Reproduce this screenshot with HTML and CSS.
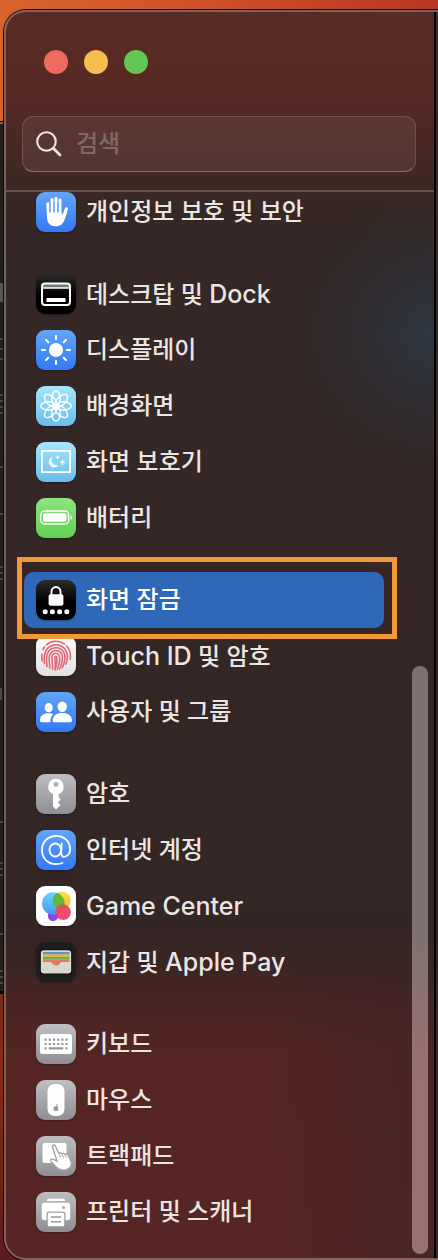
FILE: index.html
```
<!DOCTYPE html>
<html lang="ko">
<head>
<meta charset="utf-8">
<meta name="viewport" content="width=device-width, initial-scale=1">
<title>시스템 설정</title>
<link rel="stylesheet" href="styles.css">
</head>
<body>
<div class="window">
  <aside class="sidebar">
    <header class="header">
      <div class="lights">
        <button class="light light-close" type="button" aria-label="닫기"></button>
        <button class="light light-min" type="button" aria-label="최소화"></button>
        <button class="light light-zoom" type="button" aria-label="확대"></button>
      </div>
      <label class="search">
        <svg class="search-icon" viewBox="0 0 26 26" aria-hidden="true"><circle cx="10.5" cy="10.5" r="9.3" fill="none" stroke="#eee8e6" stroke-width="2.1"/><path d="M17.3 17.3 24 24" stroke="#eee8e6" stroke-width="2.8" stroke-linecap="round"/></svg>
        <input class="search-input" type="search" placeholder="검색" aria-label="검색">
      </label>
    </header>
    <nav class="list">
      <div class="group">
        <a class="item" href="#privacy"><svg class="icon blue" viewBox="0 0 40 40" aria-hidden="true"><g stroke="#fff" stroke-width="3" stroke-linecap="round" fill="none"><path d="M11.8 11.8 12.4 23M16 7.5V22M20 6.300V22M24 8V22"/></g><path d="M10.900 20h14.700v3.200c1.100-.8 1.700-2.400 2.400-4.400l1-2.800c.5-1.400 3.100-.9 2.900.7-.5 3.300-1.800 7-3 10.200-1.700 4.600-4.300 7.300-9.300 7.300-5.200 0-8.100-2.800-8.500-7.900z" fill="#fff"/><path d="M14 12v9M18 10v11M22 10v11" stroke="#3f86f5" stroke-width=".7"/></svg><span>개인정보 보호 및 보안</span></a>
      </div>
      <div class="group">
        <a class="item" href="#dock"><svg class="icon black" viewBox="0 0 40 40" aria-hidden="true"><path d="M7 10h26v4H7z" fill="#777"/><rect x="6" y="9.500" width="28" height="21.500" rx="3" fill="none" stroke="#fff" stroke-width="2"/><path d="M6 14h28" stroke="#fff" stroke-width="1.500"/><path d="M10.500 24h19v4h-19z" fill="#fff"/></svg><span>데스크탑 및 <span class="latin">Dock</span></span></a>
        <a class="item" href="#display"><svg class="icon blue" viewBox="0 0 40 40" aria-hidden="true"><circle cx="20" cy="20" r="7" fill="#fff"/><path d="M20 6v3M20 31v3M6 20h3M31 20h3M10.100 10.100l2.100 2.100M27.800 27.800l2.100 2.100M10.100 29.900l2.100-2.100M27.800 12.200l2.100-2.100" stroke="#fff" stroke-width="2.100" stroke-linecap="round"/></svg><span>디스플레이</span></a>
        <a class="item" href="#wallpaper"><svg class="icon sky" viewBox="0 0 40 40" aria-hidden="true"><defs><ellipse id="petal" cx="20" cy="12.600" rx="4.200" ry="7.900"/></defs><g fill="none" stroke="#fff" stroke-width="1.400"><use href="#petal"/><use href="#petal" transform="rotate(45 20 20)"/><use href="#petal" transform="rotate(90 20 20)"/><use href="#petal" transform="rotate(135 20 20)"/><use href="#petal" transform="rotate(180 20 20)"/><use href="#petal" transform="rotate(225 20 20)"/><use href="#petal" transform="rotate(270 20 20)"/><use href="#petal" transform="rotate(315 20 20)"/></g></svg><span>배경화면</span></a>
        <a class="item" href="#screensaver"><svg class="icon sky" viewBox="0 0 40 40" aria-hidden="true"><path d="M5.900 8.900h28.200v21.200H5.900z" fill="none" stroke="#fff" stroke-width="1.800"/><path d="M16.300 14.800a5.500 5.500 0 1 0 6.300 8.500c-5.500 1-8.300-4-6.300-8.500z" fill="#fff"/><path d="M21.700 12.700l.7 1.900 1.900.7-1.900.7-.7 1.900-.7-1.900-1.900-.7 1.900-.7zM26.500 17l.9 2.300 2.300.9-2.300.9-.9 2.300-.9-2.300-2.300-.9 2.300-.9z" fill="#fff"/></svg><span>화면 보호기</span></a>
        <a class="item" href="#battery"><svg class="icon green" viewBox="0 0 40 40" aria-hidden="true"><rect x="4.700" y="13" width="28" height="13" rx="4" fill="none" stroke="#fff" stroke-width="1.300"/><rect x="7" y="15.200" width="23.500" height="8.600" rx="2" fill="#fff"/><path d="M34.500 17.300c2 .7 2 3.700 0 4.400z" fill="#fff"/></svg><span>배터리</span></a>
      </div>
      <div class="group">
        <a class="item selected" href="#lock" aria-current="page"><svg class="icon black" viewBox="0 0 40 40" aria-hidden="true"><path d="M15.500 15v-3.500a4.500 4.500 0 0 1 9 0V15" fill="none" stroke="#fff" stroke-width="1.900"/><rect x="12.600" y="14.300" width="14.800" height="11.400" rx="2" fill="#fff"/><g fill="#fff"><circle cx="9.200" cy="31.700" r="2.500"/><circle cx="16.400" cy="31.700" r="2.500"/><circle cx="23.600" cy="31.700" r="2.500"/><circle cx="30.800" cy="31.700" r="2.500"/></g></svg><span>화면 잠금</span></a>
        <a class="item" href="#touchid"><svg class="icon white" viewBox="0 0 40 40" aria-hidden="true"><g fill="none" stroke="#df6878" stroke-width="1.600" stroke-linecap="round"><path d="M10.500 8.800C15 4.500 23 4 28.500 8M7 13.500l1.500-2.700M30.400 9.800C34 13.300 35 18 34.300 23.500M5.800 18c-.3 3 0 5 .4 7"/><path d="M8.500 27.500c-.7-5.500-.8-9 1.600-13C14 7.500 24.500 7 29 13.300c3.300 4.500 2.800 10 .8 15"/><path d="M11 30.500c-.4-5-1.300-9.500.6-13.500 3-6.600 12.500-7 16-1 2.700 4.500 1 10.500-1.200 15.500"/><path d="M13.700 32c.1-5-1.200-9.500 0-13 2-5.500 9-6 11.700-1.500 2.400 4 .4 10.500-1.600 15.500"/><path d="M16.500 33.300c.5-5-1-10-.4-13.300 1-3.300 5.500-3.700 7-.5 1.500 3.500.2 9-1.800 14"/><path d="M19 34c.9-4.500 0-9.500-.1-12.500.1-1.600 1.800-1.600 2 0 .3 3.500-.2 7-.9 9.500"/></g></svg><span><span class="latin">Touch ID</span> 및 암호</span></a>
        <a class="item" href="#users"><svg class="icon blue" viewBox="0 0 40 40" aria-hidden="true"><g fill="#fff"><ellipse cx="12.700" cy="15.700" rx="4.100" ry="4.600"/><path d="M4 28.500c0-5 3.300-7.300 8.500-7.300 2 0 3.600.3 4.800 1-2 1.700-3 4-2.900 8H5.200c-.8 0-1.200-.6-1.200-1.700z"/><ellipse cx="26.200" cy="14.800" rx="4.700" ry="5.200"/><path d="M16.600 28.800c0-5.400 3.900-7.900 9.600-7.900s9.800 2.500 9.800 7.900c0 .9-.5 1.400-1.500 1.400H18c-.9 0-1.400-.5-1.400-1.400z"/></g></svg><span>사용자 및 그룹</span></a>
      </div>
      <div class="group">
        <a class="item" href="#passwords"><svg class="icon gray" viewBox="0 0 40 40" aria-hidden="true"><path d="M20 4.800a8 8 0 0 0-3 15.300v12.400l3 3 4.500-4.300-2.500-3 2.600-2.800-2-2.700v-2.500A8 8 0 0 0 20 4.800zm0 2.900a2.500 2.500 0 1 1 0 5 2.500 2.500 0 0 1 0-5z" fill="#fff" fill-rule="evenodd"/></svg><span>암호</span></a>
        <a class="item" href="#accounts"><svg class="icon blue" viewBox="0 0 40 40" aria-hidden="true"><g fill="none" stroke="#fff" stroke-width="1.800" stroke-linecap="round"><ellipse cx="19.300" cy="20" rx="5.800" ry="6.500"/><path d="M25.700 13.500 25.200 22c-.2 5 2.400 5.500 4.800 4.300 2.800-1.400 4.100-4.300 4.100-7.300C34.100 11.300 28.300 6 20.500 6 11.900 6 6 11.800 6 20s5.500 14 14 14c2.400 0 4.500-.3 6.500-1"/></g></svg><span>인터넷 계정</span></a>
        <a class="item" href="#gamecenter"><svg class="icon snow" viewBox="0 0 40 40" aria-hidden="true"><defs><linearGradient id="gcb" x2="0" y2="1"><stop stop-color="#65d8f8"/><stop offset="1" stop-color="#4a93ef"/></linearGradient><linearGradient id="gcy" x2="0" y2="1"><stop stop-color="#fbe44a"/><stop offset="1" stop-color="#f0b52f"/></linearGradient><clipPath id="gcc"><circle cx="17.200" cy="17.500" r="11.200"/></clipPath></defs><circle cx="17" cy="29.700" r="5.200" fill="#8742f0"/><circle cx="25.800" cy="14.500" r="9" fill="url(#gcy)"/><circle cx="17.200" cy="17.500" r="11.200" fill="url(#gcb)"/><circle cx="25.800" cy="14.500" r="9" fill="#62b63f" clip-path="url(#gcc)"/><circle cx="27.200" cy="26.300" r="7.700" fill="#ef4166" opacity=".94"/><path d="M19.600 26.200a7.700 7.700 0 0 1 8.600-7.500c-1.500 4.600-4.100 7.200-8.500 9.300z" fill="#dc5358"/></svg><span class="latin">Game Center</span></a>
        <a class="item" href="#wallet"><svg class="icon wallet" viewBox="0 0 40 40" aria-hidden="true"><rect x="3.800" y="7.500" width="32.400" height="25" rx="4" fill="#050505"/><rect x="4.800" y="8.300" width="30.400" height="23.200" rx="3" fill="#dad7cb"/><path d="M7 10h26.500v2.500H7z" fill="#4e98cb"/><path d="M7 12.500h26.500V15H7z" fill="#edb23f"/><path d="M7 15h26.500v2.500H7z" fill="#64b24f"/><path d="M7 17.500h26.500v2.400H26c-1.800 0-2.500 3.500-5.800 3.500S16 19.900 14.200 19.900H7z" fill="#df7967"/></svg><span>지갑 및 <span class="latin">Apple Pay</span></span></a>
      </div>
      <div class="group">
        <a class="item" href="#keyboard"><svg class="icon gray" viewBox="0 0 40 40" aria-hidden="true"><rect x="4" y="10" width="32" height="20" rx="2.500" fill="#fff"/><path d="M8.500 15.700h24M8.500 20h24" stroke="#98979b" stroke-width="2.200" stroke-dasharray="2.200 2"/><path d="M8.500 24.300h2.200M12.700 24.300h14.600M29.400 24.300h2.200" stroke="#98979b" stroke-width="2.200"/></svg><span>키보드</span></a>
        <a class="item" href="#mouse"><svg class="icon gray" viewBox="0 0 40 40" aria-hidden="true"><rect x="11.500" y="4" width="17" height="32" rx="7" fill="#fff"/><path d="M20 26.300c1.200-.7 2.200-.3 2.500.3-1 .7-.9 2.200.2 2.700-.6 1.500-1.600 2-2.700 1.500-1.300.5-2.500-.4-2.600-2.200-.1-1.700 1.200-2.900 2.600-2.300zM20 25.900c-.1-1 .6-1.800 1.500-1.900 0 1-.7 1.800-1.500 1.900z" fill="#98979b"/></svg><span>마우스</span></a>
        <a class="item" href="#trackpad"><svg class="icon gray" viewBox="0 0 40 40" aria-hidden="true"><rect x="6.500" y="7" width="24" height="20" rx="2" fill="#fff"/><path d="M16.600 11.200c-.8-2 2-3.200 3-.9l2.900 6.800c1.500-.8 2.800-.2 3.200.7 1.400-.9 2.700-.3 3.200.8 1.500-.9 2.800-.3 3.400.9l2.200 4.600c2.200 4.700.4 7.500-3.500 9.300-5.500 2.300-9.600-.3-14.500-6.300-1.300-1.500-2.700-2.300-1.800-3.500 1-1.200 3.200-.4 6.300 1.600z" fill="#fff" stroke="#a6a5a9" stroke-width="1.400"/><path d="M23 17.800l1.300 3.300M26.300 18.500l1.200 2.900M29.500 19.400l1 2.500" stroke="#a6a5a9" stroke-width="1"/></svg><span>트랙패드</span></a>
        <a class="item" href="#printer"><svg class="icon gray" viewBox="0 0 40 40" aria-hidden="true"><path d="M11 9c0-1.500 1-2.300 2.500-2.300h13c1.500 0 2.500.8 2.500 2.300zM8.500 10.800h23c1.700 0 2.700 1 2.700 2.700v12c0 1.700-1 2.700-2.700 2.700h-2v-6.500c0-1.400-.8-2.200-2.200-2.200H12.700c-1.400 0-2.200.8-2.200 2.200v6.500h-2c-1.700 0-2.700-1-2.700-2.700v-12c0-1.700 1-2.700 2.700-2.700z" fill="#fff"/><circle cx="27.600" cy="15.500" r="1.500" fill="#a6a5a9"/><rect x="11.800" y="20.800" width="16.400" height="13.500" rx="1.600" fill="#fff"/><path d="M15 25h10M15 29.700h10" stroke="#98979b" stroke-width="1.500"/></svg><span>프린터 및 스캐너</span></a>
      </div>
    </nav>
    <div class="scrollbar" aria-hidden="true"></div>
  </aside>
  <main class="pane"></main>
</div>
</body>
</html>
```
FILE: styles.css
```
* {
  box-sizing: border-box;
}

body {
  margin: 0;
  min-height: 100vh;
  display: flex;
  flex-direction: column;
  padding: 10px 0 0 4px;
  font-family: Inter, "Noto Sans CJK KR", sans-serif;
  font-size: 24px;
  line-height: 30px;
  font-weight: 500;
  color: #ebe6e4;
  background:
    linear-gradient(#5c5652, #5c5652) 0 283px / 3px 19px no-repeat,
    repeating-linear-gradient(transparent 0 8px, #4d4744 8px 10px) 0 330px / 3px 30px no-repeat,
    repeating-linear-gradient(transparent 0 4px, #4d4744 4px 6px) 0 390px / 3px 26px no-repeat,
    linear-gradient(#4d4744, #4d4744) 0 466px / 3px 2px no-repeat,
    linear-gradient(#4d4744, #4d4744) 0 513px / 3px 2px no-repeat,
    repeating-linear-gradient(transparent 0 4px, #4d4744 4px 6px) 0 562px / 3px 22px no-repeat,
    linear-gradient(#4d4744, #4d4744) 0 688px / 2px 12px no-repeat,
    linear-gradient(#4d4744, #4d4744) 0 821px / 3px 2px no-repeat,
    repeating-linear-gradient(transparent 0 4px, #4d4744 4px 6px) 0 858px / 3px 22px no-repeat,
    linear-gradient(#4d4744, #4d4744) 0 933px / 3px 2px no-repeat,
    repeating-linear-gradient(transparent 0 4px, #4d4744 4px 6px) 0 966px / 3px 22px no-repeat,
    linear-gradient(#000 0 1px, #6b6562 1px 3px, #231d1a 3px 870px, #000 870px) 0 121px / 4px 873px no-repeat,
    linear-gradient(#7a2c16, #852c18 30%, #5e1a1c) 0 994px / 30px 266px no-repeat,
    linear-gradient(90deg, #d9632f, #cf502a 50%, #b93524);
}

.window {
  flex: 1;
  display: flex;
  border: 2px solid rgba(255, 240, 235, .28);
  border-right: 0;
  border-radius: 22px 0 0 22px;
  box-shadow: 0 0 0 1px #120b09;
  background:
    radial-gradient(ellipse 150px 140px at 100% 322px, rgba(42, 66, 86, .6), rgba(42, 60, 76, .3) 50%, transparent),
    linear-gradient(90deg, transparent 60%, rgba(50, 36, 40, .35)) 0 100% / 100% 300px no-repeat,
    linear-gradient(#582c24 0, #562923 80px, #502823 110px, #432923 150px, #392724 185px, #342726 230px, #332625 900px, #3a2524 950px, #4a2523 990px, #542523 1040px, #562524 100%);
}

.sidebar {
  flex: 1;
  min-width: 0;
  position: relative;
}

.header {
  padding: 38px 18px 18px 16px;
  border-bottom: 2px solid rgba(255, 240, 235, .22);
}

.lights {
  display: flex;
  gap: 16px;
  padding-left: 22px;
  margin-bottom: 42px;
}

.light {
  width: 24px;
  height: 24px;
  padding: 0;
  border: 0;
  border-radius: 50%;
}

.light-close {
  background: #ed6b5f;
}

.light-min {
  background: #f5be4f;
}

.light-zoom {
  background: #62c554;
}

.search {
  display: flex;
  align-items: center;
  gap: 14px;
  height: 56px;
  padding: 0 13px;
  border: 1px solid rgba(255, 240, 235, .14);
  border-bottom-color: rgba(255, 240, 235, .32);
  border-radius: 11px;
  background: rgba(255, 235, 225, .08);
}

.search-icon {
  flex: none;
  width: 26px;
  height: 26px;
}

.search-input {
  flex: 1;
  min-width: 0;
  padding: 0;
  border: 0;
  outline: 0;
  background: none;
  font: inherit;
  color: inherit;
}

.search-input::placeholder {
  color: #806963;
  opacity: 1;
}

.list {
  margin-top: -8px;
  padding: 0 50px 18px 18px;
}

.group + .group {
  margin-top: 26px;
}

.item {
  position: relative;
  display: flex;
  align-items: center;
  gap: 10px;
  height: 56px;
  padding: 0 12px;
  color: inherit;
  text-decoration: none;
  white-space: nowrap;
}

.latin {
  font-size: 25px;
}

.selected {
  z-index: 1;
  border-radius: 10px;
  background: #2f68b8;
  color: #fff;
}

.selected::after {
  content: "";
  position: absolute;
  inset: -15px -13px -11px -7px;
  border: 5px solid #f29837;
}

.icon {
  flex: none;
  width: 40px;
  height: 40px;
  border-radius: 9px;
  box-shadow: 0 1px 2px rgba(0, 0, 0, .3);
}

.blue {
  background: linear-gradient(#62a5f8, #3379f6);
}

.black {
  background: linear-gradient(#2c2c2c, #000 55%);
}

.sky {
  background: linear-gradient(#a5e6fb, #6bbcec);
}

.green {
  background: linear-gradient(#8ee381, #62d052);
}

.white {
  background: linear-gradient(#fdfdfd, #e2e2e2);
}

.snow {
  background: #fff;
}

.gray {
  background: linear-gradient(#bebdc2, #8f8e93);
}

.wallet {
  background: #1d1f1f;
}

.scrollbar {
  position: absolute;
  top: 654px;
  right: 6px;
  bottom: 4px;
  width: 16px;
  border-radius: 8px;
  background: linear-gradient(#7e7270, #7e7270 45%, #9a7070 70%, #9a7070);
}

.pane {
  width: 4px;
  border-left: 2px solid #000;
  background: #342b29;
}
```
